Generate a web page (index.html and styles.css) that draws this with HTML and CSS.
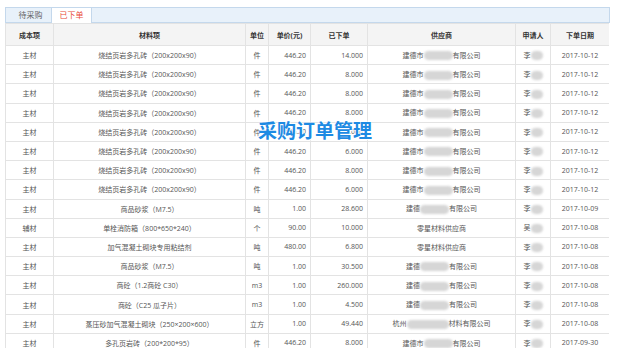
FILE: index.html
```html
<!DOCTYPE html>
<html lang="zh-CN">

<head>
    <meta charset="UTF-8">
    <title>采购订单管理</title>
    <link rel="stylesheet" href="styles.css">
</head>

<body>
    <div class="page">
        <!-- Tabs -->
        <div class="tabs">
            <span class="tab">待采购</span>
            <span class="tab active">已下单</span>
        </div>

        <!-- Order table -->
        <div class="table-wrap">
            <table class="orders">
                <colgroup>
                    <col class="c-type">
                    <col class="c-name">
                    <col class="c-unit">
                    <col class="c-price">
                    <col class="c-qty">
                    <col class="c-supplier">
                    <col class="c-user">
                    <col class="c-date">
                </colgroup>
                <thead>
                    <tr>
                        <th>成本项</th>
                        <th>材料项</th>
                        <th>单位</th>
                        <th>单价(元)</th>
                        <th>已下单</th>
                        <th>供应商</th>
                        <th>申请人</th>
                        <th>下单日期</th>
                    </tr>
                </thead>
                <tbody>
                    <tr><td>主材</td><td>烧结页岩多孔砖（200x200x90）</td><td>件</td><td class="num">446.20</td><td class="num">14.000</td><td>建德市<span class="blur"></span>有限公司</td><td>李<span class="blur small"></span></td><td>2017-10-12</td></tr>
                    <tr><td>主材</td><td>烧结页岩多孔砖（200x200x90）</td><td>件</td><td class="num">446.20</td><td class="num">8.000</td><td>建德市<span class="blur"></span>有限公司</td><td>李<span class="blur small"></span></td><td>2017-10-12</td></tr>
                    <tr><td>主材</td><td>烧结页岩多孔砖（200x200x90）</td><td>件</td><td class="num">446.20</td><td class="num">8.000</td><td>建德市<span class="blur"></span>有限公司</td><td>李<span class="blur small"></span></td><td>2017-10-12</td></tr>
                    <tr><td>主材</td><td>烧结页岩多孔砖（200x200x90）</td><td>件</td><td class="num">446.20</td><td class="num">8.000</td><td>建德市<span class="blur"></span>有限公司</td><td>李<span class="blur small"></span></td><td>2017-10-12</td></tr>
                    <tr><td>主材</td><td>烧结页岩多孔砖（200x200x90）</td><td>件</td><td class="num">446.20</td><td class="num">8.000</td><td>建德市<span class="blur"></span>有限公司</td><td>李<span class="blur small"></span></td><td>2017-10-12</td></tr>
                    <tr><td>主材</td><td>烧结页岩多孔砖（200x200x90）</td><td>件</td><td class="num">446.20</td><td class="num">6.000</td><td>建德市<span class="blur"></span>有限公司</td><td>李<span class="blur small"></span></td><td>2017-10-12</td></tr>
                    <tr><td>主材</td><td>烧结页岩多孔砖（200x200x90）</td><td>件</td><td class="num">446.20</td><td class="num">8.000</td><td>建德市<span class="blur"></span>有限公司</td><td>李<span class="blur small"></span></td><td>2017-10-12</td></tr>
                    <tr><td>主材</td><td>烧结页岩多孔砖（200x200x90）</td><td>件</td><td class="num">446.20</td><td class="num">6.000</td><td>建德市<span class="blur"></span>有限公司</td><td>李<span class="blur small"></span></td><td>2017-10-12</td></tr>
                    <tr><td>主材</td><td>商品砂浆（M7.5）</td><td>吨</td><td class="num">1.00</td><td class="num">28.600</td><td>建德<span class="blur"></span>有限公司</td><td>李<span class="blur small"></span></td><td>2017-10-09</td></tr>
                    <tr><td>辅材</td><td>单栓消防箱（800*650*240）</td><td>个</td><td class="num">90.00</td><td class="num">10.000</td><td>零星材料供应商</td><td>吴<span class="blur small"></span></td><td>2017-10-08</td></tr>
                    <tr><td>主材</td><td>加气混凝土砌块专用粘结剂</td><td>吨</td><td class="num">480.00</td><td class="num">6.800</td><td>零星材料供应商</td><td>李<span class="blur small"></span></td><td>2017-10-08</td></tr>
                    <tr><td>主材</td><td>商品砂浆（M7.5）</td><td>吨</td><td class="num">1.00</td><td class="num">30.500</td><td>建德<span class="blur"></span>有限公司</td><td>李<span class="blur small"></span></td><td>2017-10-08</td></tr>
                    <tr><td>主材</td><td>商砼（1.2商砼 C30）</td><td>m3</td><td class="num">1.00</td><td class="num">260.000</td><td>建德<span class="blur"></span>有限公司</td><td>李<span class="blur small"></span></td><td>2017-10-08</td></tr>
                    <tr><td>主材</td><td>商砼（C25 瓜子片）</td><td>m3</td><td class="num">1.00</td><td class="num">4.500</td><td>建德<span class="blur"></span>有限公司</td><td>李<span class="blur small"></span></td><td>2017-10-08</td></tr>
                    <tr><td>主材</td><td>蒸压砂加气混凝土砌块（250×200×600）</td><td>立方</td><td class="num">1.00</td><td class="num">49.440</td><td>杭州<span class="blur wide"></span>材料有限公司</td><td>李<span class="blur small"></span></td><td>2017-10-08</td></tr>
                    <tr><td>主材</td><td>多孔页岩砖（200*200*95）</td><td>件</td><td class="num">446.20</td><td class="num">8.000</td><td>建德市<span class="blur"></span>有限公司</td><td>李<span class="blur small"></span></td><td>2017-09-30</td></tr>
                </tbody>
            </table>

            <!-- Page title stamped over the grid -->
            <div class="stamp">采购订单管理</div>
        </div>
    </div>
</body>

</html>
```

FILE: styles.css
```css
* {
    margin: 0;
    padding: 0;
    box-sizing: border-box;
}

body {
    font-family: 'Open Sans', 'Noto Sans CJK SC', sans-serif;
    background-color: #fff;
    color: #555;
    overflow: hidden;
}

.page {
    padding: 7px 7px 0 5px;
}

/* Tabs */
.tabs {
    display: flex;
    height: 16px;
    background-color: #e8f1fa;
    border: 1px solid #c4d8ec;
    padding-left: 4px;
}

.tab {
    width: 41px;
    font-size: 8px;
    line-height: 14px;
    text-align: center;
    color: #666;
}

.tab.active {
    height: 15px;
    background-color: #fff;
    border: 1px solid #c4d8ec;
    border-bottom: none;
    border-top: none;
    color: #e84a3a;
}

/* Table */
.table-wrap {
    position: relative;
    width: 604px;
    height: 325px;
    overflow: hidden;
}

.orders {
    width: 604px;
    table-layout: fixed;
    border-collapse: collapse;
    font-size: 7px;
}

.c-type { width: 48px; }
.c-name { width: 192px; }
.c-unit { width: 23px; }
.c-price { width: 42px; }
.c-qty { width: 57px; }
.c-supplier { width: 148px; }
.c-user { width: 35px; }
.c-date { width: 59px; }

.orders th,
.orders td {
    border: 1px solid #e3e3e3;
    text-align: center;
    white-space: nowrap;
    overflow: hidden;
    padding: 0 4px;
}

.orders th {
    height: 22px;
    background-color: #f4f4f4;
    color: #333;
    font-weight: bold;
}

.orders td {
    height: 19.2px;
}

.orders td.num {
    text-align: right;
}

.orders tbody tr:first-child td {
    border-top-color: #dcdcdc;
}

/* Masked names */
.blur {
    display: inline-block;
    width: 29px;
    height: 9px;
    vertical-align: middle;
    background-color: #d6d6d6;
    border-radius: 5px;
    filter: blur(1.2px);
}

.blur.small {
    width: 12px;
}

.blur.wide {
    width: 42px;
}

.stamp {
    position: absolute;
    left: 253px;
    top: 95px;
    font-family: 'Noto Sans CJK SC', sans-serif;
    font-size: 19px;
    font-weight: bold;
    line-height: 24px;
    color: #1d8ae3;
    text-shadow: 0 0 2px #fff, 0 0 2px #fff, 1px 1px 1px #fff;
}
```
